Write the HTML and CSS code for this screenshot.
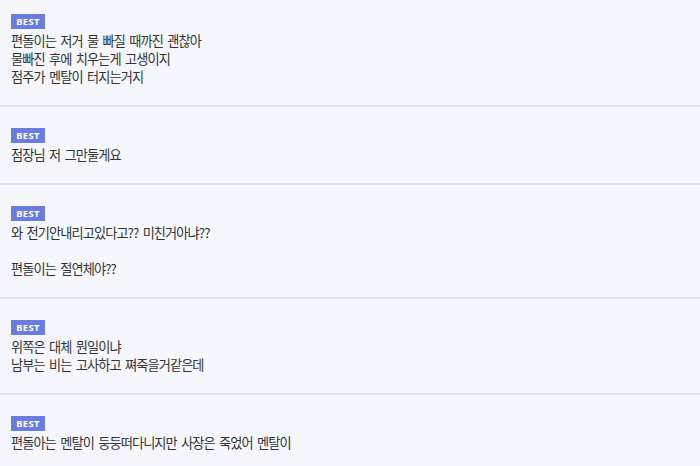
FILE: index.html
```html
<!DOCTYPE html>
<html lang="ko">
<head>
<meta charset="utf-8">
<link rel="stylesheet" href="styles.css">
</head>
<body>
<ul class="list">
  <li class="item first">
    <span class="badge">BEST</span>
    <p class="text">편돌이는 저거 물 빠질 때까진 괜찮아<br>물빠진 후에 치우는게 고생이지<br>점주가 멘탈이 터지는거지</p>
  </li>
  <li class="item">
    <span class="badge">BEST</span>
    <p class="text">점장님 저 그만둘게요</p>
  </li>
  <li class="item">
    <span class="badge">BEST</span>
    <p class="text">와 전기안내리고있다고?? 미친거아냐??<br><br>편돌이는 절연체야??</p>
  </li>
  <li class="item">
    <span class="badge">BEST</span>
    <p class="text">위쪽은 대체 뭔일이냐<br>남부는 비는 고사하고 쪄죽을거같은데</p>
  </li>
  <li class="item">
    <span class="badge">BEST</span>
    <p class="text">편돌아는 멘탈이 둥둥떠다니지만 사장은 죽었어 멘탈이</p>
  </li>
</ul>
</body>
</html>
```
FILE: styles.css
```css
html, body {
  margin: 0;
  padding: 0;
  background: #f5f7fc;
}
body {
  font-family: "Noto Sans CJK KR", "Noto Sans", sans-serif;
  color: #333;
}
.list {
  list-style: none;
  margin: 0;
  padding: 0;
}
.item {
  display: flex;
  flex-direction: column;
  align-items: flex-start;
  padding: 21px 11px 19px;
  border-bottom: 2px solid #e0e2e7;
}
.item.first {
  padding-top: 14px;
}
.badge {
  display: block;
  width: 34px;
  height: 15px;
  line-height: 15px;
  text-align: center;
  background: #6a7ce0;
  color: #fff;
  font-family: "Noto Sans", sans-serif;
  font-weight: 700;
  font-size: 9.5px;
  letter-spacing: 0.3px;
}
.text {
  margin: 3px 0 0;
  font-size: 13.2px;
  line-height: 18px;
  letter-spacing: -0.9px;
  word-spacing: 1.5px;
}
```
